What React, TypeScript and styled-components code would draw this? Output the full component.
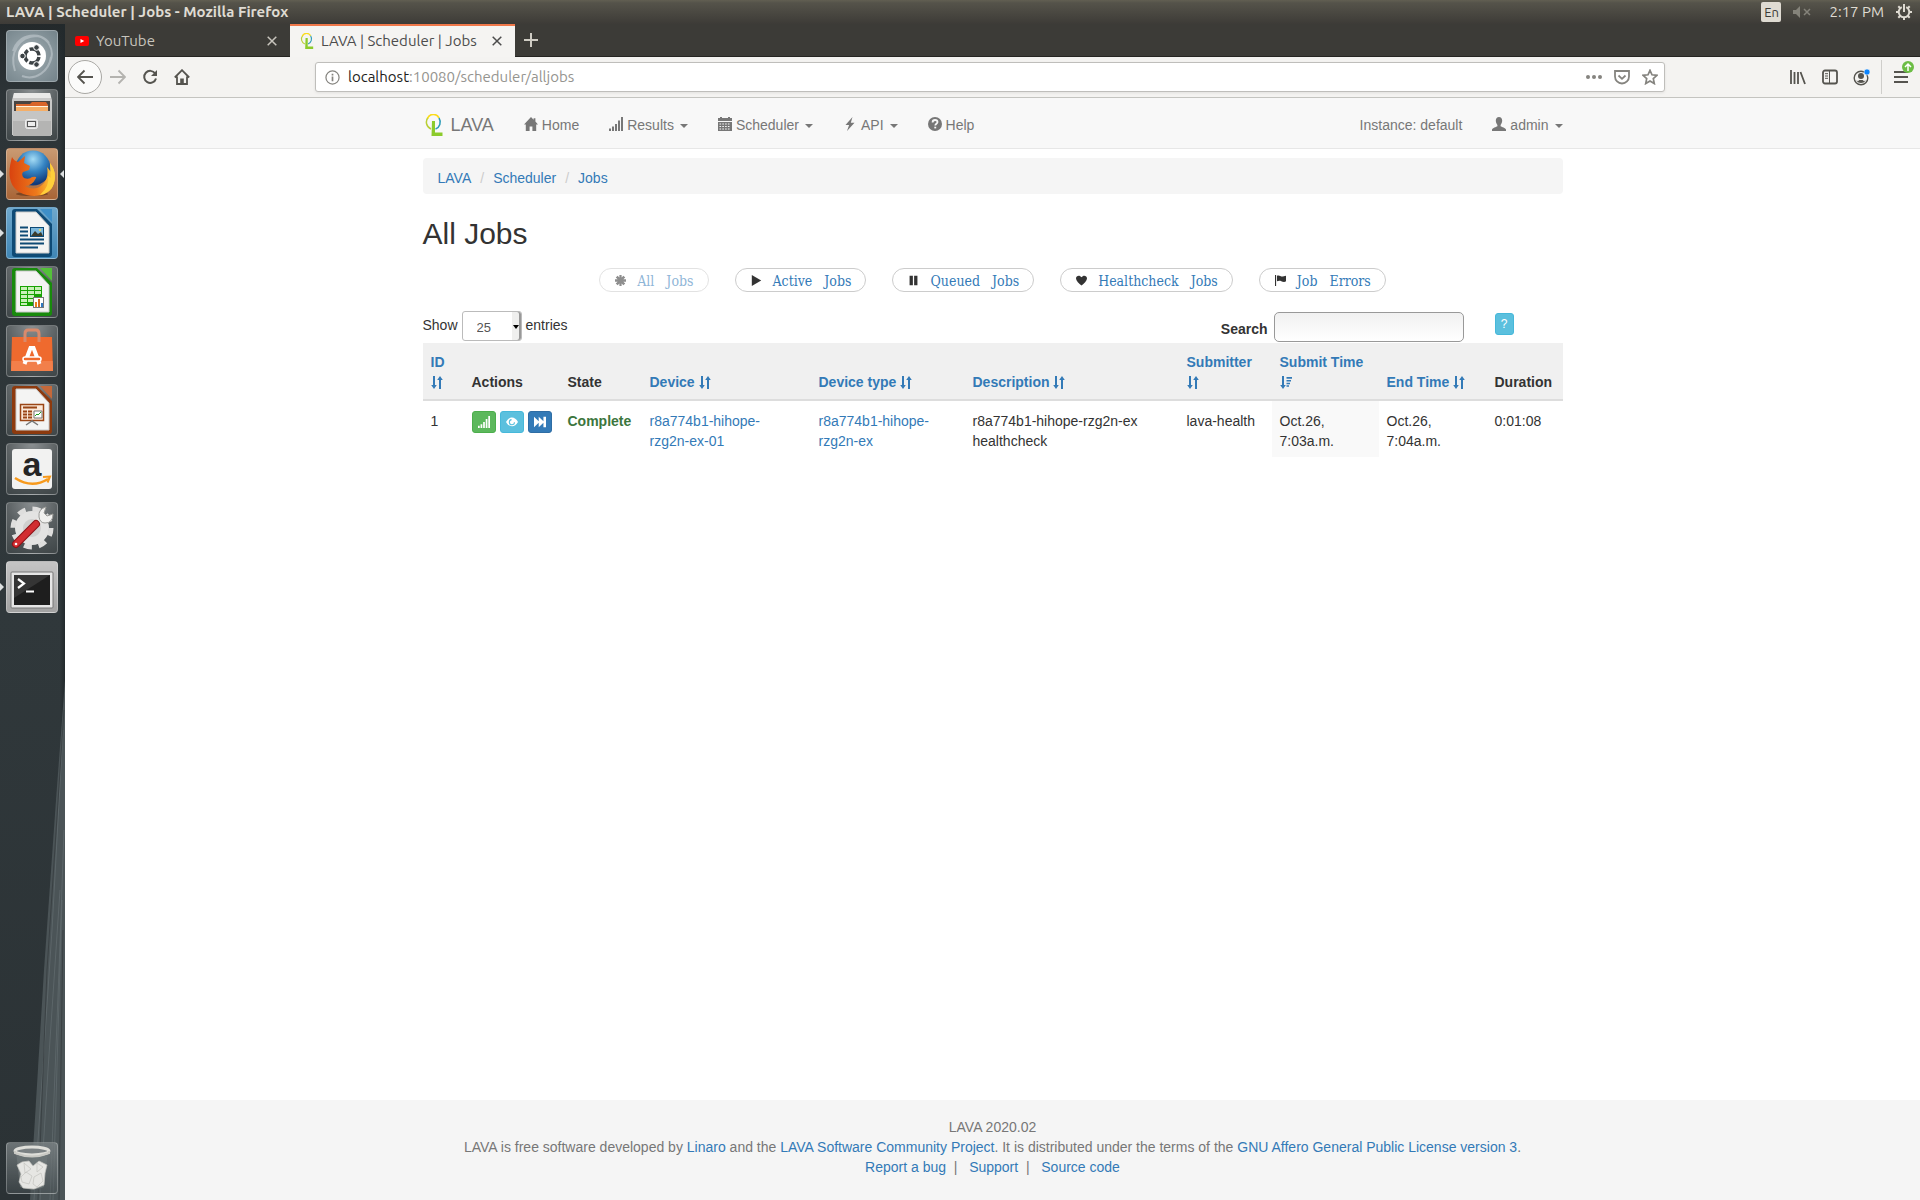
import React from "react";
import styled, { createGlobalStyle, css } from "styled-components";

const uiFont = `Ubuntu, "Noto Sans", "Open Sans", sans-serif`;
const pageFont = `"Liberation Sans", Arial, sans-serif`;
const link = "#337ab7";

const GlobalStyle = createGlobalStyle`
  *, *::before, *::after { box-sizing: border-box; }
  html, body { margin: 0; padding: 0; }
  body { font-family: ${pageFont}; font-size: 14px; line-height: 20px; color: #333; background: #fff; }
  button, input, select { font-family: inherit; margin: 0; }
  a { color: ${link}; text-decoration: none; }
`;

/* ---------- desktop shell ---------- */

const Desktop = styled.div`
  display: flex;
  flex-direction: column;
  min-height: 100vh;
`;

const TopPanel = styled.header`
  display: flex;
  align-items: center;
  justify-content: space-between;
  height: 24px;
  padding: 0 8px 0 6px;
  background: linear-gradient(#625f52, #55534a 12%, #3d3b37);
  color: #dfdbd2;
  font-family: ${uiFont};
`;

const WindowTitle = styled.div`
  font-size: 15px;
  font-weight: 700;
`;

const Indicators = styled.div`
  display: flex;
  align-items: center;
  font-size: 15px;
`;

const KeyboardBadge = styled.span`
  display: flex;
  align-items: center;
  justify-content: center;
  width: 20px;
  height: 20px;
  border-radius: 2px;
  background: #dfdbd2;
  color: #3c3b37;
  font-size: 13px;
`;

const IndicatorIcon = styled.span`
  display: flex;
  margin-left: 12px;
`;

const Clock = styled.time`
  margin-left: 18px;
`;

const Workspace = styled.div`
  display: flex;
  flex: 1;
`;

const LauncherBar = styled.nav`
  position: relative;
  display: flex;
  flex-direction: column;
  gap: 7px;
  width: 65px;
  padding: 6px 0;
  flex-shrink: 0;
  overflow: hidden;
  background: linear-gradient(90deg, transparent 92%, #22292c), linear-gradient(#23292b, #2d3437 6%, #30383b 50%, #2b3235);
`;

const Wallpaper = styled.svg`
  position: absolute;
  right: 0;
  bottom: 0;
`;

const Tile = styled.button<{ $tone?: string; $last?: boolean }>`
  position: relative;
  display: block;
  width: 52px;
  height: 52px;
  margin: ${(p) => (p.$last ? "auto 6px 0" : "0 6px")};
  padding: 0;
  border: 1px solid rgba(255, 255, 255, 0.26);
  border-radius: 4px;
  background: ${(p) => p.$tone || "radial-gradient(circle at 50% 0, #8a8f91, #5b6163 45%, #3f4648)"};
  svg { display: block; width: 50px; height: 50px; }
`;

const Pip = styled.i<{ $right?: boolean }>`
  position: absolute;
  top: 21px;
  ${(p) =>
    p.$right
      ? css`right: -7px; border-right: 4px solid #dcdfe0;`
      : css`left: -7px; border-left: 4px solid #dcdfe0;`}
  border-top: 4px solid transparent;
  border-bottom: 4px solid transparent;
`;

/* ---------- browser chrome ---------- */

const Browser = styled.div`
  display: flex;
  flex: 1;
  flex-direction: column;
  min-width: 0;
`;

const TabStrip = styled.div`
  display: flex;
  height: 33px;
  background: #3c3b37;
  border-bottom: 1px solid #262522;
  font-family: ${uiFont};
`;

const Tab = styled.div<{ $active?: boolean }>`
  display: flex;
  align-items: center;
  width: 225px;
  height: 33px;
  padding: 0 13px 0 10px;
  font-size: 15px;
  color: ${(p) => (p.$active ? "#4c4c4c" : "#c8c5bd")};
  ${(p) => p.$active && css`background: #f5f4f2; box-shadow: inset 0 2px #f0784a;`}
`;

const TabTitle = styled.span`
  flex: 1;
  margin-left: 7px;
  white-space: nowrap;
`;

const BareButton = styled.button`
  display: flex;
  align-items: center;
  justify-content: center;
  padding: 0;
  border: 0;
  background: none;
  color: inherit;
`;

const NewTab = styled(BareButton)`
  width: 32px;
  color: #cfccc4;
`;

const Toolbar = styled.div`
  display: flex;
  align-items: center;
  height: 41px;
  padding: 0 12px 0 3px;
  background: #f4f3f1;
  border-bottom: 1px solid #c4c4c0;
  color: #55544f;
`;

const BackButton = styled(BareButton)`
  width: 34px;
  height: 34px;
  border: 1px solid #a9a8a4;
  border-radius: 50%;
  background: #fbfbfa;
`;

const ToolButton = styled(BareButton)<{ $faded?: boolean }>`
  width: 32px;
  height: 32px;
  opacity: ${(p) => (p.$faded ? 0.4 : 1)};
`;

const UrlBox = styled.div`
  display: flex;
  align-items: center;
  flex: 1;
  height: 30px;
  margin: 0 117px;
  padding: 0 6px 0 9px;
  gap: 8px;
  border: 1px solid #bfbebb;
  border-radius: 3px;
  background: #fff;
  box-shadow: 0 1px 3px rgba(0, 0, 0, 0.08);
  color: #85847f;
`;

const Url = styled.div`
  flex: 1;
  font-family: ${uiFont};
  font-size: 15px;
  color: #95948f;
  b { font-weight: 400; color: #1d1d1b; }
`;

const UrlActions = styled.div`
  display: flex;
  align-items: center;
  gap: 12px;
`;

const ToolGroup = styled.div`
  display: flex;
  align-items: center;
`;

const MenuButton = styled(BareButton)`
  position: relative;
  width: 27px;
  height: 34px;
  margin-left: 3px;
  padding-left: 12px;
  border-left: 1px solid #cfcecb;
`;

const UpdateBadge = styled.svg`
  position: absolute;
  top: 1px;
  right: -6px;
`;

/* ---------- page ---------- */

const Page = styled.div`
  display: flex;
  flex: 1;
  flex-direction: column;
`;

const Container = styled.div`
  width: 100%;
  max-width: 1140px;
  margin: 0 auto;
`;

const Navbar = styled.nav`
  background: #f8f8f8;
  border-bottom: 1px solid #e7e7e7;
`;

const NavRow = styled(Container)`
  display: flex;
  align-items: flex-start;
  height: 50px;
`;

const navItem = css`
  padding: 17px 15px 13px;
  color: #777;
  white-space: nowrap;
`;

const Brand = styled.a`
  display: flex;
  align-items: center;
  gap: 8px;
  height: 50px;
  padding: 4px 15px 0 2px;
  color: #777;
  font-size: 18px;
`;

const NavLink = styled.a`${navItem}`;
const NavText = styled.span`
  ${navItem}
  margin-left: auto;
`;
const AccountLink = styled(NavLink)`padding-right: 0;`;

const Glyph = styled.svg`
  width: 14px;
  height: 14px;
  margin-right: 4px;
  vertical-align: -1px;
`;

const Caret = styled.i`
  display: inline-block;
  margin-left: 6px;
  vertical-align: middle;
  border-top: 4px solid;
  border-left: 4px solid transparent;
  border-right: 4px solid transparent;
`;

const Breadcrumb = styled.ol`
  display: flex;
  margin: 9px 0 0;
  padding: 10px 15px 6px;
  list-style: none;
  border-radius: 4px;
  background: #f5f5f5;
  li + li::before { content: "/"; padding: 0 9px; color: #ccc; }
`;

const Title = styled.h2`
  margin: 23px 0 18px;
  font-size: 30px;
  font-weight: 400;
  line-height: 33px;
`;

const Filters = styled.div`
  display: flex;
  justify-content: center;
  gap: 26px;
`;

const Pill = styled.button`
  display: flex;
  align-items: center;
  gap: 12px;
  height: 24px;
  padding: 2px 14px 0;
  border: 1px solid #ccc;
  border-radius: 12px;
  background: #fff;
  color: ${link};
  font-family: "DejaVu Serif Condensed", "DejaVu Serif", serif;
  font-stretch: condensed;
  font-size: 14px;
  line-height: 20px;
  &:disabled { opacity: 0.55; }
  svg { width: 11px; height: 11px; margin: 0 -1px 2px 1px; color: #333; }
`;

const Controls = styled.div`
  display: flex;
  align-items: flex-start;
  height: 51px;
  padding-top: 19px;
`;

const LengthLabel = styled.label`
  display: flex;
  align-items: flex-start;
  gap: 4px;
  line-height: 28px;
`;

const SelectBox = styled.span`
  position: relative;
  display: flex;
  &::after {
    content: "";
    position: absolute;
    top: 14px;
    right: 3px;
    border-top: 4px solid #000;
    border-left: 3px solid transparent;
    border-right: 3px solid transparent;
  }
`;

const LengthSelect = styled.select`
  appearance: none;
  width: 60px;
  height: 30px;
  padding: 3px 10px 0 14px;
  border: 1px solid #bbb;
  border-radius: 3px;
  background: linear-gradient(90deg, #fff 49px, #efefee 49px);
  box-shadow: inset -2px 0 #999;
  color: #555;
  font-size: 13px;
`;

const SearchLabel = styled.label`
  display: flex;
  align-items: center;
  gap: 6px;
  margin: 1px 0 0 auto;
  font-weight: 700;
  span { padding-top: 4px; }
`;

const SearchInput = styled.input`
  width: 190px;
  height: 30px;
  padding: 0 8px;
  border: 1px solid #999;
  border-radius: 5px;
  background: linear-gradient(#f1f1f1, #fff);
`;

const tones = {
  green: ["#5cb85c", "#4cae4c"],
  cyan: ["#5bc0de", "#46b8da"],
  blue: ["#337ab7", "#2e6da4"],
};

const SmallButton = styled.button<{ $tone: keyof typeof tones }>`
  display: inline-flex;
  align-items: center;
  justify-content: center;
  min-width: 19px;
  height: 22px;
  padding: 0 5px;
  border: 1px solid ${(p) => tones[p.$tone][1]};
  border-radius: 3px;
  background: ${(p) => tones[p.$tone][0]};
  color: #fff;
  font-size: 12px;
  svg { width: 12px; height: 12px; }
`;

const HelpSlot = styled.div`
  width: 68px;
  margin: 2px 0 0 31px;
`;

const Table = styled.table`
  width: 100%;
  table-layout: fixed;
  border-collapse: separate;
  border-spacing: 0;
`;

const Th = styled.th`
  padding: 9px 8px 7px;
  vertical-align: bottom;
  text-align: left;
  background: #f0f0f0;
  border-bottom: 2px solid #ddd;
`;

const SortIcon = styled.svg`
  width: 12px;
  height: 13px;
  vertical-align: -2px;
`;

const Td = styled.td<{ $sorted?: boolean }>`
  padding: 10px 8px 6px;
  vertical-align: top;
  background: ${(p) => (p.$sorted ? "#f9f9f9" : "#fff")};
`;

const Actions = styled.div`
  display: flex;
  gap: 4px;
`;

const Complete = styled.strong`color: #3c763d;`;
const Keep = styled.span`white-space: nowrap;`;

const Footer = styled.footer`
  height: 100px;
  margin-top: auto;
  padding-top: 17px;
  text-align: center;
  color: #777;
  background: #f5f5f5;
  p { margin: 0; }
`;

/* ---------- glyphs ---------- */

const glyphs: Record<string, React.ReactNode> = {
  home: <path d="M7 0 0 7.4h1.8V14h3.8V9.4h2.8V14h3.8V7.4H14L11.4 4.6V1.2H9.6v1.6z" />,
  signal: <path d="M0 11.500h2V14H0zM3 9.500h2V14H3zM6 7h2v7H6zM9 3.500h2V14H9zM12 0h2v14h-2z" />,
  calendar: (
    <path fillRule="evenodd" d="M0 1h2V0h2v1h6V0h2v1h2v3H0zM0 5h14v9H0zM1.500 6.500v1h1.600v-1zm2.800 0v1h1.600v-1zm2.800 0v1h1.600v-1zm2.800 0v1h1.600v-1zM1.500 9v1h1.600V9zm2.800 0v1h1.600V9zm2.800 0v1h1.600V9zm2.800 0v1h1.600V9zM1.500 11.500v1h1.600v-1zm2.800 0v1h1.600v-1zm2.800 0v1h1.600v-1zm2.800 0v1h1.600v-1z" />
  ),
  flash: <path d="M9.5 0 2.5 8h3.6L4 14l7.500-8.200H7.800z" />,
  help: (
    <>
      <circle cx="7" cy="7" r="7" />
      <path d="M4.600 5.400C4.600 3.800 5.600 3 7 3s2.500.8 2.500 2.100C9.500 6.800 7.300 6.800 7.300 8.500" fill="none" stroke="#f8f8f8" strokeWidth="1.800" />
      <path d="M6.300 9.700h1.900v1.700H6.300z" fill="#f8f8f8" />
    </>
  ),
  user: <path d="M7 0c2 0 3.200 1.500 3.200 3.600 0 1.900-.8 3.400-1.600 4.300v1.300c1 .8 5 1.600 5.400 3.400V14H0v-1.400c.4-1.800 4.400-2.600 5.400-3.400V7.900C4.600 7 3.800 5.500 3.800 3.600 3.800 1.500 5 0 7 0z" />,
  asterisk: <path d="M5.600 0h2.800v3.200l2.300-2.300 2.300 2.300-2.300 2.200H14v3.200h-3.300l2.300 2.200-2.300 2.300-2.300-2.300V14H5.600v-3.200l-2.300 2.300L1 10.800l2.300-2.200H0V5.400h3.300L1 3.200 3.300.9l2.300 2.300z" />,
  play: <path d="M1 0v14l12-7z" />,
  pause: <path d="M2 1h4.200v12H2zM7.800 1H12v12H7.800z" />,
  heart: <path d="M7 13.500C4 10.500 0 7.500 0 4.300 0 .5 5-.5 7 3c2-3.500 7-2.500 7 1.300 0 3.200-4 6.200-7 9.200z" />,
  flag: <path d="M0 0h1.400v14H0zM2.500 1c3-1.600 5 1.500 7.500.8L14 1v7c-2 1.500-4.500.6-6-.2S4.200 7 2.500 8z" />,
  eye: (
    <>
      <path d="M0 7c3.500-7 10.500-7 14 0-3.500 6.500-10.500 6.500-14 0z" />
      <path d="M6.500 4.200a3 3 0 1 0 3.400 3" fill="none" stroke="#5bc0de" strokeWidth="1.300" />
    </>
  ),
  forward: <path d="M0 1l5.500 5V1L11 6V1h3v12h-3V8l-5.500 5V8L0 13z" />,
};

const G = ({ name }: { name: string }) => (
  <Glyph viewBox="0 0 14 14" fill="currentColor" aria-hidden="true">{glyphs[name]}</Glyph>
);

const PlainGlyph = ({ name }: { name: string }) => (
  <svg viewBox="0 0 14 14" fill="currentColor" aria-hidden="true">{glyphs[name]}</svg>
);

const Sort = ({ desc }: { desc?: boolean }) => (
  <SortIcon viewBox="0 0 12 13" fill="currentColor" aria-hidden="true">
    <path d="M2 0h2v9h1.800L3 13 .2 9H2z" />
    {desc ? <path d="M6.500 1H12v1.800H6.500zM6.500 4H11v1.600H6.500zM6.500 6.700H10v1.500H6.500zM6.500 9.300H9v1.500H6.500z" /> : <path d="M8 13h2V4h1.800L9 0 6.200 4H8z" />}
  </SortIcon>
);

const LavaLogo = ({ w, h }: { w: number; h: number }) => (
  <svg width={w} height={h} viewBox="0 0 18 22" fill="none" aria-hidden="true">
    <path d="M6 15A7 7.300 0 0 1 3 3.500" stroke="#b9cf35" strokeWidth="1.500" />
    <path d="M2.500 4.300A6.500 7 0 0 1 14 4" stroke="#fbdc1c" strokeWidth="1.700" />
    <path d="M14 4a7 7.300 0 0 1-3.500 11" stroke="#2d9cb8" strokeWidth="1.500" />
    <path d="M7 7h3v11.500h7.500V22H6.500z" fill="#8ccb2c" />
  </svg>
);

/* ---------- launcher artwork ---------- */

const DocIcon = ({ color, light, children }: { color: string; light: string; children: React.ReactNode }) => (
  <svg viewBox="0 0 50 50">
    <path d="M8 1h22l15 15v30q0 3-3 3H8q-3 0-3-3V4q0-3 3-3z" fill={color} />
    <path d="M33 1h12v13z" fill={light} />
    <path d="M9 4h20l13 14v27H9z" fill="#f4f4f3" stroke="#c9c9c9" />
    {children}
  </svg>
);

const apps: { name: string; tone?: string; left?: boolean; right?: boolean; art: React.ReactNode }[] = [
  {
    name: "Dash",
    tone: "radial-gradient(circle at 45% 50%, #aeb9be, #8a989e 50%, #74838a)",
    art: (
      <svg viewBox="0 0 50 50" fill="none">
        <path d="M8 40C2 22 12 5 30 5c12 2 18 15 13 26M15 45c14 5 27-5 29-19M6 20C12 2 34 0 42 12" stroke="#c3ccd0" strokeWidth="2" opacity=".6" />
        <circle cx="25" cy="25" r="14" fill="#fff" />
        <circle cx="25" cy="25" r="7" stroke="#3c4245" strokeWidth="3.500" strokeDasharray="12.700 2" strokeDashoffset="-1" />
        <g fill="#3c4245" stroke="#fff">
          <circle cx="15.500" cy="25" r="2.800" /><circle cx="29.500" cy="16.500" r="2.800" /><circle cx="29.500" cy="33.500" r="2.800" />
        </g>
      </svg>
    ),
  },
  {
    name: "Files",
    art: (
      <svg viewBox="0 0 50 50">
        <path d="M7 3h36l2 7v35H5V10z" fill="#c9c9c8" />
        <path d="M7 3h36l1 5H6z" fill="#e9e9e8" />
        <path d="M7 11h36v11H7z" fill="#4a4542" />
        <path d="M9 14h14l2-2h14l2 3v7H9z" fill="#d9652a" />
        <path d="M9 17h32v5H9z" fill="#f5ae67" /><path d="M9 16.500h32" stroke="#fff3df" />
        <path d="M6 21h38v25H6z" fill="#b4b4b3" /><path d="M6 21h38v10H6z" fill="#c5c5c4" />
        <rect x="18.500" y="29.500" width="12" height="9" rx="2" fill="#d5d5d5" stroke="#eee" />
        <rect x="20.500" y="31.500" width="8" height="5" fill="#eee" stroke="#555" />
      </svg>
    ),
  },
  {
    name: "Firefox",
    tone: "linear-gradient(#c99a72, #a86537)",
    left: true,
    right: true,
    art: (
      <svg viewBox="0 0 50 50">
        <defs>
          <radialGradient id="globe" cx=".5" cy=".25" r=".7"><stop stopColor="#a5dcf5" /><stop offset=".5" stopColor="#3584c3" /><stop offset="1" stopColor="#123a79" /></radialGradient>
          <linearGradient id="fox" x1="0" x2="1"><stop stopColor="#d9430f" /><stop offset=".6" stopColor="#ee7a1b" /><stop offset="1" stopColor="#ffd63e" /></linearGradient>
        </defs>
        <ellipse cx="25" cy="45" rx="16" ry="2" fill="#5c3115" opacity=".6" />
        <circle cx="26" cy="19" r="17.500" fill="url(#globe)" />
        <path d="M5 8q2 4 6 5l7-6-1 7 6 3-1 4-6 2q-2 3 1 6 5 2 8-1 5-1 4 1-4 8-11 8 10 6 18-2 6-6 4-17l4 5-1-9q7 9 4 20C43 52 10 51 4 33 1 24 3 16 5 8z" fill="url(#fox)" />
        <path d="M43 14q7 9 4 20-3 10-14 12 10-9 8-19l3 2z" fill="#ffcf3a" />
      </svg>
    ),
  },
  {
    name: "Writer",
    tone: "linear-gradient(#6fa8cc, #3f86b5)",
    left: true,
    art: (
      <DocIcon color="#0e4a75" light="#3e8fc8">
        <path d="M13 19.500h8M13 23.500h8M13 27.500h8M13 31.500h24M13 35.500h24M13 39.500h18" stroke="#0e4a75" strokeWidth="2" />
        <rect x="23.500" y="19.500" width="13" height="9" fill="#7cb8dc" stroke="#0e4a75" /><path d="m24 28 4-5 3 3 3-2 2 4z" fill="#3c3c2c" /><circle cx="33" cy="22" r="1" fill="#ffe14d" />
      </DocIcon>
    ),
  },
  {
    name: "Calc",
    art: (
      <DocIcon color="#188a0c" light="#54c03a">
        <path d="M13 19h22v20H13z" fill="#18a303" />
        <path d="M14 20h6v3h-6zM21 20h6v3h-6zM28 20h6v3h-6zM14 24h6v3h-6zM21 24h6v3h-6zM28 24h6v3h-6zM14 28h6v3h-6zM21 28h6v3h-6zM14 32h6v3h-6zM21 32h6v3h-6zM14 36h6v2h-6z" fill="#c9f0b8" />
        <rect x="26.500" y="30.500" width="10" height="10" fill="#fff" stroke="#777" />
        <path d="M28 35h2v5h-2z" fill="#e8811a" /><path d="M31 32h2v8h-2z" fill="#d2691e" /><path d="M34 36h2v4h-2z" fill="#2f78c0" />
      </DocIcon>
    ),
  },
  {
    name: "Ubuntu Software",
    art: (
      <svg viewBox="0 0 50 50" fill="none">
        <path d="M5 11h40l1 34H4z" fill="#ef6a2e" /><path d="M4.500 35h41.200l.3 10H4z" fill="#f27f4a" />
        <path d="M18 16V8q0-4 3-4h8q3 0 3 4v8" stroke="#d98a6b" strokeWidth="3" />
        <path d="m17.500 38 6-16h3l6 16" stroke="#fff" strokeWidth="4" />
        <rect x="16" y="31" width="18" height="4" rx="2" fill="#ef6a2e" stroke="#fff" strokeWidth="1.500" />
      </svg>
    ),
  },
  {
    name: "Impress",
    art: (
      <DocIcon color="#8d3a0e" light="#c4683a">
        <rect x="13.500" y="19.500" width="23" height="16" fill="#fbe8d8" stroke="#9a4515" strokeWidth="1.500" />
        <path d="M16 22.500h14M16 26.500h4M16 29.500h4M16 32.500h4M21 26.500h4M21 29.500h4M21 32.500h4" stroke="#9a4515" strokeWidth="1.800" />
        <path d="M27 26h8v7h-8z" fill="#fff" stroke="#777" /><path d="m28 31 2-2 1 1 3-3" stroke="#20a020" fill="none" />
        <path d="m19 40 6-4 6 4" stroke="#777" strokeWidth="1.500" fill="none" />
      </DocIcon>
    ),
  },
  {
    name: "Amazon",
    art: (
      <svg viewBox="0 0 50 50" fill="none">
        <rect x="5" y="5" width="40" height="40" rx="3" fill="#f2f2f1" />
        <text x="25" y="32" textAnchor="middle" fontFamily="Liberation Sans, sans-serif" fontWeight="700" fontSize="34" fill="#252525">a</text>
        <path d="M8 34q17 11 33 1" stroke="#f79a1c" strokeWidth="2.500" /><path d="m36 33 7-.5-2.500 6" stroke="#f79a1c" strokeWidth="2" />
      </svg>
    ),
  },
  {
    name: "System Settings",
    art: (
      <svg viewBox="0 0 50 50" fill="none">
        <circle cx="25" cy="25" r="19" stroke="#dededd" strokeWidth="5" strokeDasharray="8 6.900" />
        <circle cx="25" cy="25" r="13" fill="#cfcfce" stroke="#e3e3e2" strokeWidth="8" />
        <path d="m28 22 8-8" stroke="#e8e8e6" strokeWidth="6" />
        <path d="M32 14q-1-8 7-10l-2 6 3 3 6-2q0 9-8 9-5 0-6-6z" fill="#f0f0ee" stroke="#9b9b98" />
        <path d="M9 41 29 21" stroke="#8e1216" strokeWidth="8" strokeLinecap="round" /><path d="M9 41 29 21" stroke="#d22d31" strokeWidth="6" strokeLinecap="round" /><circle cx="9" cy="41" r="1.300" fill="#fff" />
      </svg>
    ),
  },
  {
    name: "Terminal",
    tone: "linear-gradient(#c4c4c4, #a2a2a2)",
    left: true,
    art: (
      <svg viewBox="0 0 50 50" fill="none">
        <rect x="4" y="10" width="42" height="36" rx="1" fill="#e6e6e6" stroke="#777" />
        <rect x="7" y="13" width="36" height="30" fill="#1e1e1e" /><path d="M7 13h36L7 36z" fill="#353535" />
        <path d="m11 17 6 4.500-6 4.500M19 29.500h8" stroke="#fff" strokeWidth="2.200" />
      </svg>
    ),
  },
];

const TrashArt = () => (
  <svg viewBox="0 0 50 50">
    <path d="M9 8h32l-4 36q-12 5-24 0z" fill="#6f7779" opacity=".7" />
    <g fill="#e6e6e3" stroke="#c3c3bf" strokeWidth=".7">
      <path d="m10 22 5-3 7-1 4 5 6-5 8 4-2 8-1 12-10 4-11-1-4-6 2-8z" />
      <path d="m14 34 5-5 6 4-3 8-7-2zM27 34l7-4 2 8-6 6-4-3zM17 20l7 6-6 4zM30 20l6 4-6 5z" />
    </g>
    <ellipse cx="25" cy="8" rx="17" ry="4" fill="#7b8183" stroke="#deded9" strokeWidth="3" />
    <path d="M8 8v2q17 7 34 0V8" fill="none" stroke="#c9c9c4" strokeWidth="2" />
  </svg>
);

function Launcher() {
  return (
    <LauncherBar aria-label="Launcher">
      <Wallpaper width="65" height="530" viewBox="0 0 65 530" fill="none" aria-hidden="true">
        <path d="M65 10 56 130 44 300 30 530h35z" fill="#4b5457" />
        <path d="M63 60 52 260 34 530M64 160 59 300 50 530M62 230l-6 200-3 100M60 220l-12 180-8 130" stroke="#687174" opacity=".6" />
        <path d="M64 40 47 300 38 530M63 260l-4 270" stroke="#33393c" opacity=".7" />
      </Wallpaper>
      {apps.map((a) => (
        <Tile key={a.name} aria-label={a.name} $tone={a.tone}>
          {a.left && <Pip />}
          {a.right && <Pip $right />}
          {a.art}
        </Tile>
      ))}
      <Tile aria-label="Trash" $last $tone="linear-gradient(#7c8385cc, #4a525580)"><TrashArt /></Tile>
    </LauncherBar>
  );
}

/* ---------- chrome parts ---------- */

const CloseIcon = () => (
  <svg width="10" height="10" viewBox="0 0 10 10" stroke="currentColor" strokeWidth="1.500"><path d="m.7.7 8.600 8.600M9.300.7.7 9.300" /></svg>
);

const Line = ({ children, size = 16 }: { children: React.ReactNode; size?: number }) => (
  <svg width={size} height={size} viewBox="0 0 16 16" fill="none" stroke="currentColor" strokeWidth="1.800" aria-hidden="true">{children}</svg>
);

function BrowserChrome() {
  return (
    <>
      <TabStrip>
        <Tab>
          <svg width="14" height="10" viewBox="0 0 14 10"><rect width="14" height="10" rx="2" fill="#f00" /><path d="M5.500 3v4L9.300 5z" fill="#fff" /></svg>
          <TabTitle>YouTube</TabTitle>
          <BareButton aria-label="Close YouTube"><CloseIcon /></BareButton>
        </Tab>
        <Tab $active>
          <LavaLogo w={14} h={16} />
          <TabTitle>LAVA | Scheduler | Jobs</TabTitle>
          <BareButton aria-label="Close LAVA"><CloseIcon /></BareButton>
        </Tab>
        <NewTab aria-label="New tab"><svg width="14" height="14" stroke="currentColor" strokeWidth="2"><path d="M7 0v14M0 7h14" /></svg></NewTab>
      </TabStrip>
      <Toolbar>
        <BackButton aria-label="Back"><Line><path d="M16 8H1M7.500 1.500 1 8l6.500 6.500" /></Line></BackButton>
        <ToolButton $faded aria-label="Forward"><Line><path d="M0 8h15M8.500 1.500 15 8l-6.500 6.500" /></Line></ToolButton>
        <ToolButton aria-label="Reload"><Line><path d="M13.200 4.500A6 6 0 1 0 14 9.500" strokeWidth="2" /><path d="M15 1v6H9z" fill="currentColor" stroke="none" /></Line></ToolButton>
        <ToolButton aria-label="Home"><Line><path d="M.8 8.500 8 1.200l7.200 7.300M3 7.500V15h10V7.500" /><path d="M6.200 15V9.500h3.600V15z" fill="currentColor" stroke="none" /></Line></ToolButton>
        <UrlBox>
          <Line size={15}><circle cx="8" cy="8" r="7" strokeWidth="1.300" /><path d="M8 7v5M8 4v1.800" /></Line>
          <Url><b>localhost</b>:10080/scheduler/alljobs</Url>
          <UrlActions>
            <BareButton aria-label="Page actions"><svg width="16" height="4" fill="currentColor"><circle cx="2" cy="2" r="2" /><circle cx="8" cy="2" r="2" /><circle cx="14" cy="2" r="2" /></svg></BareButton>
            <BareButton aria-label="Save to Pocket"><Line><path d="M1 2h14v5.500a7 7 0 0 1-14 0z" /><path d="m4.500 6.500 3.500 3.300 3.500-3.300" /></Line></BareButton>
            <BareButton aria-label="Bookmark"><Line><path d="m8 1.300 2 4.500 5 .5-3.700 3.300 1 5L8 12.100l-4.300 2.500 1-5L1 6.300l5-.5z" strokeWidth="1.700" /></Line></BareButton>
          </UrlActions>
        </UrlBox>
        <ToolGroup>
          <ToolButton aria-label="Library"><Line><path d="M1 1v14M4.500 3v12M8 3v12M10.500 3l4.500 12" /></Line></ToolButton>
          <ToolButton aria-label="Sidebars"><Line><rect x="1" y="1.500" width="14" height="13" rx="2" /><path d="M7.500 2v12M3 4.700h3M3 7h3M3 9.300h3" strokeWidth="1" /></Line></ToolButton>
          <ToolButton aria-label="Account">
            <svg width="18" height="18" viewBox="0 0 18 18" fill="none"><circle cx="8" cy="10" r="6.800" stroke="currentColor" strokeWidth="1.400" /><circle cx="8" cy="8" r="3" fill="currentColor" /><path d="M3.300 12.500q2 1 3-.5h3.400q1 1.500 3 .5Q11 15 8 15t-4.700-2.500z" fill="currentColor" /><circle cx="14" cy="4" r="3" fill="#0a84ff" stroke="#f4f3f1" strokeWidth=".6" /></svg>
          </ToolButton>
          <MenuButton aria-label="Menu">
            <svg width="14" height="14" stroke="currentColor" strokeWidth="2"><path d="M0 2h14M0 7h14M0 12h14" /></svg>
            <UpdateBadge width="12" height="12" viewBox="0 0 12 12" fill="none"><circle cx="6" cy="6" r="6" fill="#6cbd45" /><path d="M6 10V3M3 6l3-3 3 3" stroke="#fff" strokeWidth="1.500" /></UpdateBadge>
          </MenuButton>
        </ToolGroup>
      </Toolbar>
    </>
  );
}

/* ---------- jobs page ---------- */

const filters = [
  { icon: "asterisk", words: ["All", "Jobs"], off: true },
  { icon: "play", words: ["Active", "Jobs"] },
  { icon: "pause", words: ["Queued", "Jobs"] },
  { icon: "heart", words: ["Healthcheck", "Jobs"] },
  { icon: "flag", words: ["Job", "Errors"] },
];

const columns: { label: string; width: number; sort?: "both" | "desc" }[] = [
  { label: "ID", width: 41, sort: "both" },
  { label: "Actions", width: 96 },
  { label: "State", width: 82 },
  { label: "Device", width: 169, sort: "both" },
  { label: "Device type", width: 154, sort: "both" },
  { label: "Description", width: 214, sort: "both" },
  { label: "Submitter", width: 93, sort: "both" },
  { label: "Submit Time", width: 107, sort: "desc" },
  { label: "End Time", width: 108, sort: "both" },
  { label: "Duration", width: 76 },
];

const JobsTable = () => (
  <Table>
    <colgroup>
      {columns.map((c) => <col key={c.label} width={c.width} />)}
    </colgroup>
    <thead>
      <tr>
        {columns.map((c) => (
          <Th key={c.label} scope="col">
            {c.sort ? <a href="#sort">{c.label} <Sort desc={c.sort === "desc"} /></a> : c.label}
          </Th>
        ))}
      </tr>
    </thead>
    <tbody>
      <tr>
        <Td>1</Td>
        <Td>
          <Actions>
            <SmallButton $tone="green" aria-label="Results"><PlainGlyph name="signal" /></SmallButton>
            <SmallButton $tone="cyan" aria-label="View"><PlainGlyph name="eye" /></SmallButton>
            <SmallButton $tone="blue" aria-label="Skip to end"><PlainGlyph name="forward" /></SmallButton>
          </Actions>
        </Td>
        <Td><Complete>Complete</Complete></Td>
        <Td><a href="#device">r8a774b1-hihope-<wbr /><Keep>rzg2n-ex-01</Keep></a></Td>
        <Td><a href="#type">r8a774b1-hihope-<wbr /><Keep>rzg2n-ex</Keep></a></Td>
        <Td>r8a774b1-hihope-rzg2n-ex healthcheck</Td>
        <Td>lava-health</Td>
        <Td $sorted>Oct.26, 7:03a.m.</Td>
        <Td>Oct.26, 7:04a.m.</Td>
        <Td>0:01:08</Td>
      </tr>
    </tbody>
  </Table>
);

const JobsPage = () => (
  <Page>
    <Navbar>
      <NavRow>
        <Brand href="#lava"><LavaLogo w={18} h={22} />LAVA</Brand>
        <NavLink href="#home"><G name="home" />Home</NavLink>
        <NavLink href="#results"><G name="signal" />Results<Caret /></NavLink>
        <NavLink href="#scheduler"><G name="calendar" />Scheduler<Caret /></NavLink>
        <NavLink href="#api"><G name="flash" />API<Caret /></NavLink>
        <NavLink href="#help"><G name="help" />Help</NavLink>
        <NavText>Instance: default</NavText>
        <AccountLink href="#admin"><G name="user" />admin<Caret /></AccountLink>
      </NavRow>
    </Navbar>
    <Container as="main">
      <Breadcrumb>
        <li><a href="#lava">LAVA</a></li>
        <li><a href="#scheduler">Scheduler</a></li>
        <li><a href="#jobs">Jobs</a></li>
      </Breadcrumb>
      <Title>All Jobs</Title>
      <Filters>
        {filters.map((f) => (
          <Pill key={f.icon} disabled={f.off}>
            <PlainGlyph name={f.icon} />
            {f.words.map((w) => <span key={w}>{w}</span>)}
          </Pill>
        ))}
      </Filters>
      <Controls>
        <LengthLabel>
          Show
          <SelectBox>
            <LengthSelect defaultValue="25"><option>10</option><option>25</option><option>50</option><option>100</option></LengthSelect>
          </SelectBox>
          entries
        </LengthLabel>
        <SearchLabel><span>Search</span><SearchInput type="text" /></SearchLabel>
        <HelpSlot><SmallButton $tone="cyan">?</SmallButton></HelpSlot>
      </Controls>
      <JobsTable />
    </Container>
    <Footer>
      <p>LAVA 2020.02</p>
      <p>
        LAVA is free software developed by <a href="#linaro">Linaro</a> and the <a href="#community">LAVA Software Community Project</a>. It is distributed under the terms of the <a href="#licence">GNU Affero General Public License version 3</a>.
      </p>
      <p>
        <a href="#bug">Report a bug</a>&nbsp; |&nbsp;&nbsp; <a href="#support">Support</a>&nbsp; |&nbsp;&nbsp; <a href="#source">Source code</a>
      </p>
    </Footer>
  </Page>
);

export default function App() {
  return (
    <Desktop>
      <GlobalStyle />
      <TopPanel>
        <WindowTitle>LAVA | Scheduler | Jobs - Mozilla Firefox</WindowTitle>
        <Indicators>
          <KeyboardBadge>En</KeyboardBadge>
          <IndicatorIcon>
            <svg width="18" height="12" viewBox="0 0 18 12" fill="none" stroke="#85837a" strokeWidth="1.500"><path d="M0 4h3l4-4v12L3 8H0z" fill="#85837a" stroke="none" /><path d="m11 3 6 6M17 3l-6 6" /></svg>
          </IndicatorIcon>
          <Clock>2:17 PM</Clock>
          <IndicatorIcon>
            <svg width="16" height="16" viewBox="0 0 16 16" fill="none" stroke="#dfdbd2"><path d="M5.800 3.200a5.300 5.300 0 1 0 4.400 0" strokeWidth="2" /><path d="M8 0v8" strokeWidth="2" /><path d="M0 8h2.500M13.500 8H16M8 13.500V16M2.300 2.300l2 2M13.700 2.300l-2 2M2.300 13.700l2-2M13.700 13.700l-2-2" strokeWidth="2" /></svg>
          </IndicatorIcon>
        </Indicators>
      </TopPanel>
      <Workspace>
        <Launcher />
        <Browser>
          <BrowserChrome />
          <JobsPage />
        </Browser>
      </Workspace>
    </Desktop>
  );
}
